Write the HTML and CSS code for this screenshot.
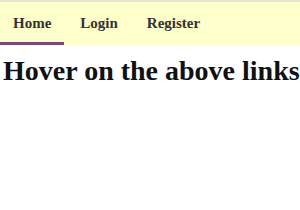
FILE: index.html
```html
<!DOCTYPE html>
<html lang="en">
  <head>
    <meta charset="UTF-8" />
    <title>Hover links</title>
    <link rel="stylesheet" href="styles.css">
  </head>
  <body>
    <nav class="nav">
      <a href="#" class="navLink active">Home</a>
      <a href="#" class="navLink">Login</a>
      <a href="#" class="navLink">Register</a>
    </nav>
    <h1 class="title">Hover on the above links</h1>
  </body>
</html>
```

FILE: styles.css
```css
body {
  margin: 0;
  font-family: "Liberation Serif", "Times New Roman", serif;
}
.nav {
  display: flex;
  gap: 3px;
  background: #ffffcc;
  border-top: 2px solid #e4e4d4;
}
.navLink {
  padding: 13px 13px 10px;
  font-size: 15px;
  font-weight: bold;
  color: #333;
  text-decoration: none;
  border-bottom: 3px solid transparent;
}
.navLink.active {
  border-bottom-color: #7b4a7b;
}
.title {
  margin: 10px 3px;
  font-size: 28px;
  white-space: nowrap;
  color: #111;
}
```
